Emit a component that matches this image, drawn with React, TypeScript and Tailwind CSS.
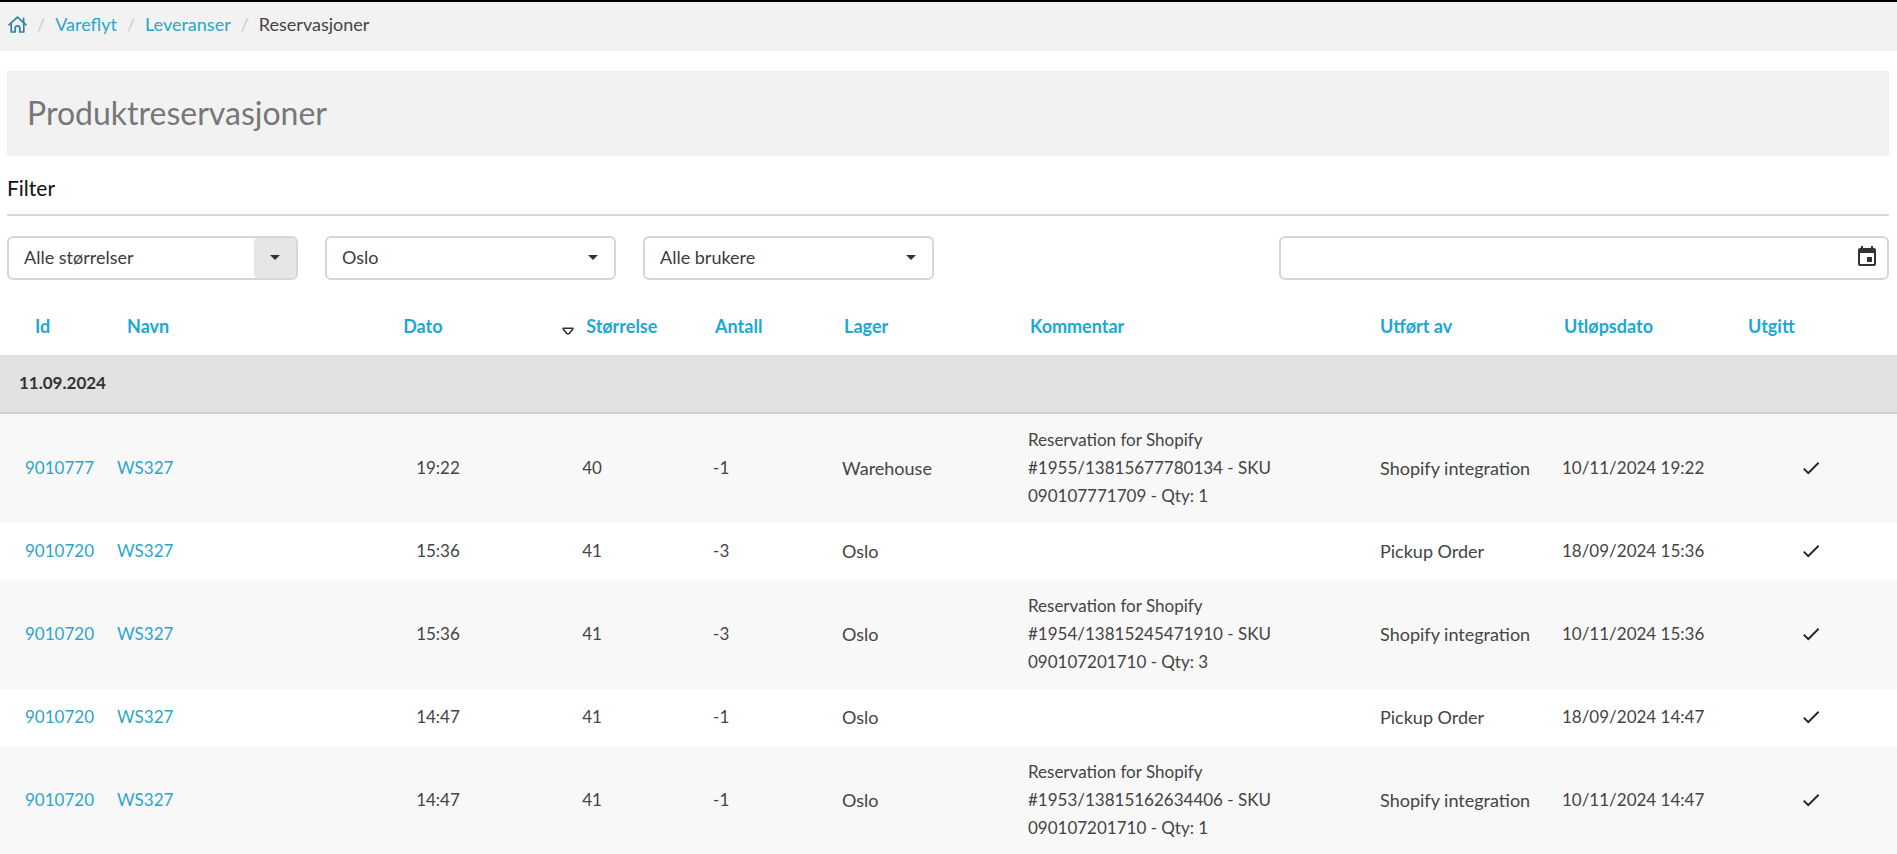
import { MdArrowDropDown, MdCheck, MdEvent } from 'react-icons/md';

type Reservation = {
  id: string;
  name: string;
  time: string;
  size: string;
  count: string;
  stock: string;
  comment?: string;
  user: string;
  expires: string;
};

const reservations: Reservation[] = [
  { id: '9010777', name: 'WS327', time: '19:22', size: '40', count: '-1', stock: 'Warehouse', comment: 'Reservation for Shopify #1955/13815677780134 - SKU 090107771709 - Qty: 1', user: 'Shopify integration', expires: '10/11/2024 19:22' },
  { id: '9010720', name: 'WS327', time: '15:36', size: '41', count: '-3', stock: 'Oslo', user: 'Pickup Order', expires: '18/09/2024 15:36' },
  { id: '9010720', name: 'WS327', time: '15:36', size: '41', count: '-3', stock: 'Oslo', comment: 'Reservation for Shopify #1954/13815245471910 - SKU 090107201710 - Qty: 3', user: 'Shopify integration', expires: '10/11/2024 15:36' },
  { id: '9010720', name: 'WS327', time: '14:47', size: '41', count: '-1', stock: 'Oslo', user: 'Pickup Order', expires: '18/09/2024 14:47' },
  { id: '9010720', name: 'WS327', time: '14:47', size: '41', count: '-1', stock: 'Oslo', comment: 'Reservation for Shopify #1953/13815162634406 - SKU 090107201710 - Qty: 1', user: 'Shopify integration', expires: '10/11/2024 14:47' },
];

const columns = [
  { label: 'Id', col: 'w-[5.75%]', pad: 'pl-[35px]' },
  { label: 'Navn', col: 'w-[15.08%]', pad: 'pl-[18px]' },
  { label: 'Dato', col: 'w-[9.44%]', pad: 'pl-2', sorted: true },
  { label: 'Størrelse', col: 'w-[6.9%]', pad: 'pl-3' },
  { label: 'Antall', col: 'w-[6.8%]', pad: 'pl-2.5' },
  { label: 'Lager', col: 'w-[9.8%]', pad: 'pl-2.5' },
  { label: 'Kommentar', col: 'w-[18.56%]', pad: 'pl-2.5' },
  { label: 'Utført av', col: 'w-[9.59%]', pad: 'pl-2' },
  { label: 'Utløpsdato', col: 'w-[9.7%]', pad: 'pl-2.5' },
  { label: 'Utgitt', col: 'w-[8.38%]', pad: 'pl-2.5' },
];

function HomeIcon() {
  return (
    <svg width="19" height="17" viewBox="0 0 19 17" fill="none" stroke="currentColor" strokeWidth="1.7" strokeLinejoin="round" strokeLinecap="round" aria-hidden="true">
      <path d="M1 8.8 9.5 1.2 18 8.8" />
      <path d="M15.6 6.4V2.4" />
      <path d="M3.2 7.4V16h4v-3.8a2.3 2.3 0 0 1 4.6 0V16h4V7.4" />
    </svg>
  );
}

function FilterSelect({ label, value, active }: { label: string; value: string; active?: boolean }) {
  return (
    <div className="relative h-11 w-[291px]">
      <select aria-label={label} className="h-full w-full appearance-none rounded-md border-2 border-[#d6d6d6] bg-white pb-0.5 pl-[15px] pr-12 text-lg text-[#3c3c3c] outline-none">
        <option>{value}</option>
      </select>
      <span className={`pointer-events-none absolute inset-y-0.5 right-0.5 flex w-[42px] items-center justify-center rounded-sm pb-0.5 text-[#333] ${active ? 'bg-[#e6e6e6]' : ''}`}>
        <MdArrowDropDown size={24} />
      </span>
    </div>
  );
}

export default function App() {
  return (
    <div className="bg-white font-[Lato,sans-serif] text-lg leading-7 text-[#444]">
      <nav aria-label="Breadcrumb" className="flex h-[51px] items-start border-t-2 border-black bg-[#f2f2f2] pl-2 pt-2">
        <ol className="flex items-center gap-2.5">
          <li>
            <a href="#hjem" aria-label="Hjem" className="block text-[#2a84a0]"><HomeIcon /></a>
          </li>
          <li aria-hidden="true" className="text-[#ccc]">/</li>
          <li><a href="#vareflyt" className="text-[#2ba6cb]">Vareflyt</a></li>
          <li aria-hidden="true" className="text-[#ccc]">/</li>
          <li><a href="#leveranser" className="text-[#2ba6cb]">Leveranser</a></li>
          <li aria-hidden="true" className="text-[#ccc]">/</li>
          <li aria-current="page">Reservasjoner</li>
        </ol>
      </nav>

      <main>
        <div className="pl-[7px] pr-2 pt-5">
          <h1 className="flex h-[85px] items-center bg-[#f2f2f2] pb-0.5 pl-5 text-[32px] text-[#777]">Produktreservasjoner</h1>
          <h2 className="mb-3 mt-[18px] text-[21px] leading-7 text-[#111]">Filter</h2>
          <hr className="border-t-2 border-[#d8d8d8]" />

          <form className="mt-5 flex items-center gap-[27px]">
            <FilterSelect label="Størrelse" value="Alle størrelser" active />
            <FilterSelect label="Lager" value="Oslo" />
            <FilterSelect label="Bruker" value="Alle brukere" />
            <div className="ml-auto flex h-11 w-[32.4%] items-center rounded-md border-2 border-[#d6d6d6] bg-white pr-2">
              <input type="text" aria-label="Dato" className="h-full min-w-0 flex-1 bg-transparent pl-3 outline-none" />
              <button type="button" aria-label="Velg dato" className="pb-0.5 text-[#333]"><MdEvent size={24} /></button>
            </div>
          </form>
        </div>

        <table className="mt-[18px] w-full table-fixed border-collapse text-left">
          <colgroup>
            {columns.map((c) => <col key={c.label} className={c.col} />)}
          </colgroup>
          <thead>
            <tr className="h-[57px]">
              {columns.map((c) => (
                <th key={c.label} scope="col" aria-sort={c.sorted ? 'descending' : undefined} className={`pb-0.5 font-bold text-[#1ba8d5] ${c.pad}`}>
                  <div className="flex items-center justify-between">
                    <a href={`#${c.label}`}>{c.label}</a>
                    {c.sorted && (
                      <svg width="12" height="8" viewBox="0 0 12 8" fill="none" stroke="#333" strokeWidth="1.6" strokeLinejoin="round" className="mt-2.5" aria-hidden="true">
                        <path d="M1.2 1.2h9.6v1L7 6.8H5L1.2 2.2z" />
                      </svg>
                    )}
                  </div>
                </th>
              ))}
            </tr>
          </thead>
          <tbody>
            <tr className="h-[58px] border-b-2 border-[#d0d0d0] bg-[#e2e2e2]">
              <th scope="rowgroup" colSpan={10} className="pb-0.5 pl-[19px] text-[17px] font-bold text-[#333]">11.09.2024</th>
            </tr>
            {reservations.map((r, i) => (
              <tr key={i} className="h-[57px] odd:bg-white even:bg-[#f8f8f8]">
                <td className="pb-0.5 pl-[25px] text-[17px]"><a href={`#${r.id}`} className="text-[#2ba6cb]">{r.id}</a></td>
                <td className="pb-0.5 pl-2 text-[17px]"><a href={`#${r.name}`} className="text-[#2ba6cb]">{r.name}</a></td>
                <td className="pb-0.5 pl-[21px] text-[17px]">{r.time}</td>
                <td className="pb-0.5 pl-2 text-[17px]">{r.size}</td>
                <td className="pb-0.5 pl-2 text-[17px]">{r.count}</td>
                <td className="pb-0.5 pl-2">{r.stock}</td>
                <td className="pl-2 text-[17px]">{r.comment && <p className="max-w-[250px] pb-[13px] pt-3">{r.comment}</p>}</td>
                <td className="whitespace-nowrap pb-0.5 pl-2">{r.user}</td>
                <td className="whitespace-nowrap pb-0.5 pl-2 text-[17px]">{r.expires}</td>
                <td className="pb-0.5 pl-[62px]"><MdCheck size={22} className="text-[#222]" role="img" aria-label="Ja" /></td>
              </tr>
            ))}
          </tbody>
        </table>
      </main>
    </div>
  );
}
